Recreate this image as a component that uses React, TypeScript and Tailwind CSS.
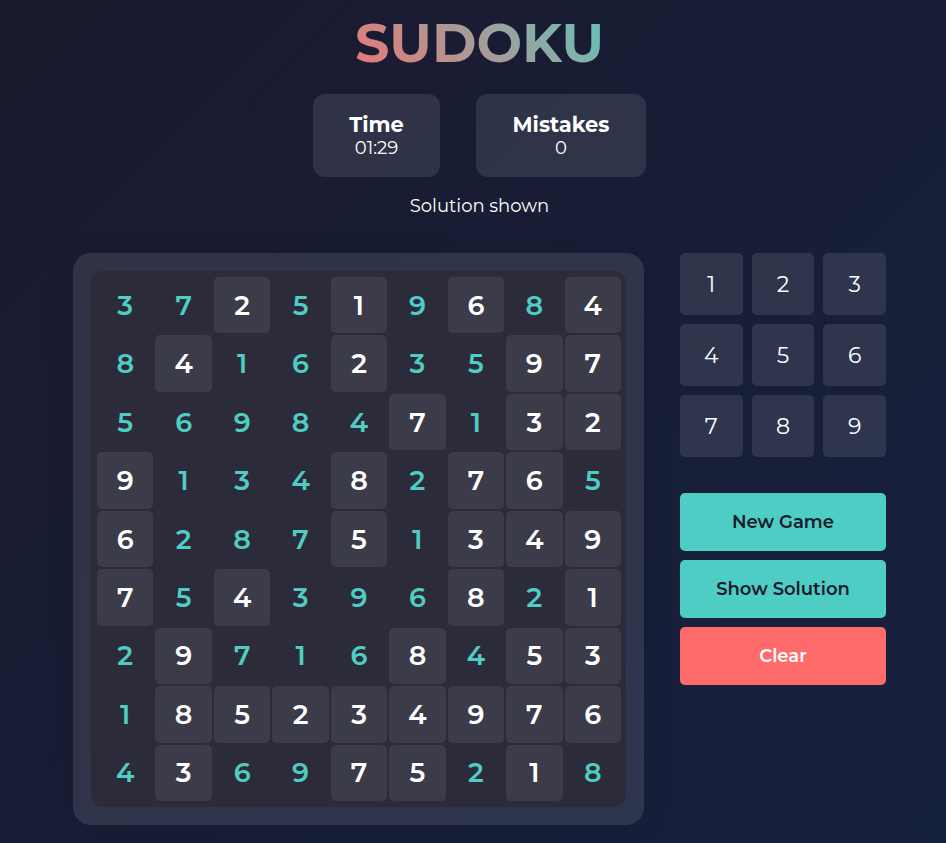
import { useState } from "react";

const SOLUTION = [
  "372519684",
  "841623597",
  "569847132",
  "913482765",
  "628751349",
  "754396821",
  "297168453",
  "185234976",
  "436975218",
];

// "x" marks a digit that was given at the start of the game.
const GIVEN = [
  "..x.x.x.x",
  ".x..x..xx",
  ".....x.xx",
  "x...x.xx.",
  "x...x.xxx",
  "x.x...x.x",
  ".x...x.xx",
  ".xxxxxxxx",
  ".x..xx.x.",
];

const DIGITS = [1, 2, 3, 4, 5, 6, 7, 8, 9];

function Stat({ label, value, width }: { label: string; value: string; width: string }) {
  return (
    <div className={`${width} flex h-[83px] flex-col items-center justify-center rounded-xl bg-white/10`}>
      <strong className="text-[21px] leading-6 font-bold">{label}</strong>
      <span className="text-[18px] leading-[22px]">{value}</span>
    </div>
  );
}

function Board({ onSelect }: { onSelect: (cell: number) => void }) {
  return (
    <div className="min-w-0 flex-1 rounded-[18px] bg-white/10 p-[18px] shadow-[0_8px_32px_rgba(0,0,0,0.1)]">
      <div className="grid grid-cols-9 gap-0.5 rounded-xl bg-[#2c2b3a] py-1.5 pr-[5px] pl-1.5">
        {SOLUTION.flatMap((row, r) =>
          row.split("").map((digit, c) => (
            <button
              key={`${r}-${c}`}
              type="button"
              onClick={() => onSelect(r * 9 + c)}
              className={`flex aspect-square items-center justify-center rounded-[5px] text-[27px] leading-none font-semibold ${
                GIVEN[r][c] === "x" ? "bg-[#3c3b4a] text-white" : "text-[#4ecdc4]"
              }`}
            >
              {digit}
            </button>
          )),
        )}
      </div>
    </div>
  );
}

export default function App() {
  const [, setCell] = useState<number | null>(null);

  return (
    <main className="min-h-screen bg-[linear-gradient(135deg,#1a1a2e,#16213e)] pt-4 pr-[60px] pb-[18px] pl-[73px] font-[Montserrat,Inter,sans-serif] text-white">
      <div className="mx-auto flex max-w-[813px] flex-col items-center">
        <h1 className="bg-[linear-gradient(45deg,#ff6b6b,#4ecdc4)] bg-clip-text px-12 text-[54px] leading-[54px] font-bold text-transparent">
          SUDOKU
        </h1>
        <div className="mt-6 flex gap-9">
          <Stat label="Time" value="01:29" width="w-[127px]" />
          <Stat label="Mistakes" value="0" width="w-[170px]" />
        </div>
        <p className="mt-[17px] text-[18px] leading-6">Solution shown</p>
        <div className="mt-[35px] flex w-full items-start gap-9">
          <Board onSelect={setCell} />
          <aside className="flex w-[206px] shrink-0 flex-col gap-9">
            <div className="grid grid-cols-3 gap-[9px]">
              {DIGITS.map((d) => (
                <button key={d} type="button" className="h-[62px] rounded-[5px] bg-white/10 text-[22px]">
                  {d}
                </button>
              ))}
            </div>
            <div className="flex flex-col gap-[9px] text-[18px] font-semibold">
              <button type="button" className="h-[58px] rounded-[5px] bg-[#4ecdc4] text-[#1a1a2e]">
                New Game
              </button>
              <button type="button" className="h-[58px] rounded-[5px] bg-[#4ecdc4] text-[#1a1a2e]">
                Show Solution
              </button>
              <button type="button" className="h-[58px] rounded-[5px] bg-[#ff6b6b] text-white">
                Clear
              </button>
            </div>
          </aside>
        </div>
      </div>
    </main>
  );
}
